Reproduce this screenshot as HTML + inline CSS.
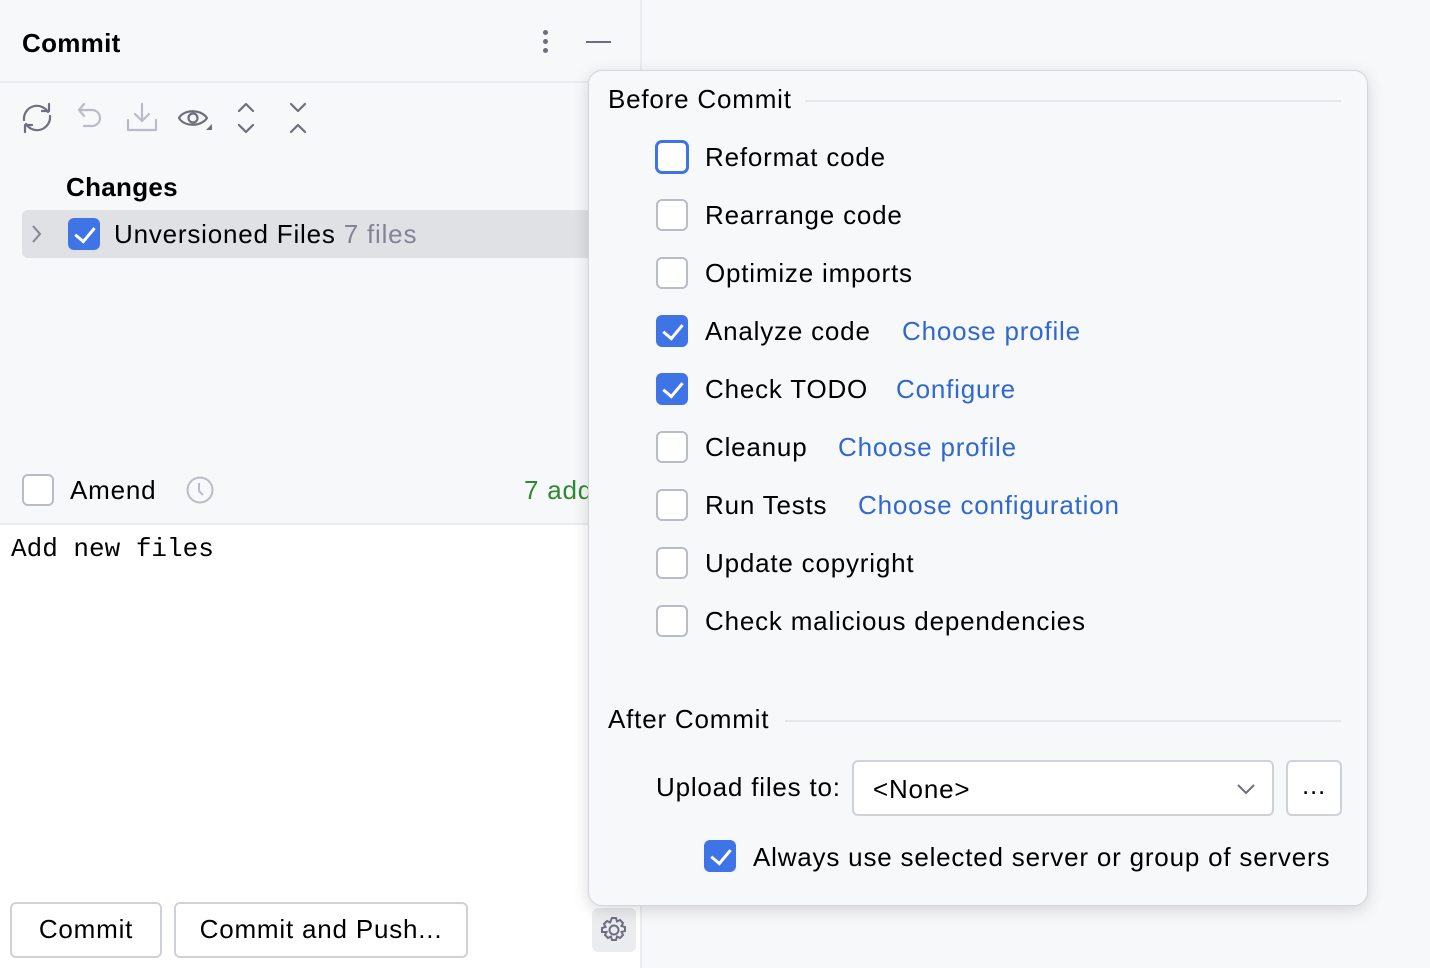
<!DOCTYPE html>
<html><head><meta charset="utf-8"><style>
*{box-sizing:border-box;margin:0;padding:0}
body{width:1430px;height:968px;background:#f7f8fa;font-family:"Liberation Sans",sans-serif;color:#000;position:relative;overflow:hidden;font-size:26px;letter-spacing:0.8px}
.a{position:absolute}
.cb{position:absolute;width:32px;height:32px;border:2px solid #b9bcc6;border-radius:6px;background:#fff}
.cb.on{background:#3f74e6;border-color:#3f74e6}
.cb.on::after{content:"";position:absolute;left:9px;top:3px;width:9px;height:16px;border:solid #fff;border-width:0 3.5px 3.5px 0;transform:rotate(40deg)}
.t{position:absolute;white-space:nowrap;line-height:30px}
.lnk{color:#3068cf}
.btn{position:absolute;border:2px solid #cfd1d8;border-radius:6px;background:#fff;text-align:center;line-height:50px}
</style></head><body>
<div class="a" style="left:640px;top:0;width:2px;height:968px;background:#ebecf0"></div>
<div class="a" style="left:0;top:81px;width:640px;height:2px;background:#ebecf0"></div>
<div class="t" style="left:22px;top:28px;font-weight:bold;font-size:26px;letter-spacing:0.3px">Commit</div>
<div class="a" style="left:543px;top:30px;width:5px;height:5px;border-radius:50%;background:#6c707e;box-shadow:0 9px 0 #6c707e,0 18px 0 #6c707e"></div>
<div class="a" style="left:586px;top:41px;width:25px;height:2px;background:#6c707e"></div>
<svg class="a" style="left:18px;top:98px" width="300" height="40" fill="none" stroke-width="2.2" stroke-linecap="round" stroke-linejoin="round">
<g stroke="#6c707e"><path d="M6 22a13 13 0 0 1 24-8M32 18a13 13 0 0 1-24 8"/><path d="M24 13h7V6M14 27H7v7"/></g>
<g stroke="#b9bcc6"><path d="M62 12h12a8 8 0 0 1 0 16h-8M66 6l-5 6 5 6"/><path d="M124 6v16M117 16l7 7 7-7M110 22v10h28V22"/></g>
<g stroke="#6c707e"><path d="M161 20c5-9 22-9 28 0-6 9-23 9-28 0z"/><circle cx="175" cy="20" r="4.5"/><path d="M221 13l7-7 7 7M221 27l7 7 7-7M273 6l7 7 7-7M273 34l7-7 7 7"/></g>
<path d="M188 32l6-6v6z" fill="#6c707e"/>
</svg>
<div class="t" style="left:66px;top:172px;font-weight:bold;letter-spacing:0.3px">Changes</div>
<div class="a" style="left:22px;top:210px;width:580px;height:48px;background:#dfe1e5;border-radius:6px"></div>
<svg class="a" style="left:30px;top:224px" width="14" height="20" fill="none" stroke="#818594" stroke-width="2"><path d="M3 2l7 8-7 8"/></svg>
<div class="cb on" style="left:68px;top:218px"></div>
<div class="t" style="left:114px;top:219px">Unversioned Files <span style="color:#818594">7 files</span></div>
<div class="cb" style="left:22px;top:474px"></div>
<div class="t" style="left:70px;top:475px">Amend</div>
<svg class="a" style="left:185px;top:475px" width="30" height="30" fill="none" stroke="#b9bcc6" stroke-width="2"><circle cx="15" cy="15" r="12.5"/><path d="M14 8v8l4 4"/></svg>
<div class="t" style="left:524px;top:475px;color:#2f8a2f">7 added</div>
<div class="a" style="left:0;top:523px;width:640px;height:2px;background:#ebecf0"></div>
<div class="a" style="left:0;top:525px;width:640px;height:443px;background:#fff"></div>
<div class="t" style="left:11px;top:534px;font-family:'Liberation Mono',monospace;font-size:26px;letter-spacing:0">Add new files</div>
<div class="btn" style="left:10px;top:902px;width:152px;height:56px">Commit</div>
<div class="btn" style="left:174px;top:902px;width:294px;height:56px">Commit and Push...</div>
<div class="a" style="left:592px;top:908px;width:44px;height:44px;background:#ebecf0;border-radius:6px"></div>
<svg class="a" style="left:599px;top:915px" width="30" height="30" fill="none" stroke="#6c707e" stroke-width="2"><circle cx="15" cy="15" r="4.5"/><path d="M13 3h4l1 3.5 3-1.5 3 3-1.5 3 3.5 1v4l-3.5 1 1.5 3-3 3-3-1.5-1 3.5h-4l-1-3.5-3 1.5-3-3 1.5-3L3 17v-4l3.5-1L5 9l3-3 3 1.5z"/></svg>

<div class="a" style="left:588px;top:70px;width:780px;height:836px;background:#f7f8fa;border:1px solid #d3d5db;border-radius:14px;box-shadow:0 4px 16px rgba(0,0,0,.15)"></div>
<div class="t" style="left:608px;top:84px">Before Commit</div>
<div class="a" style="left:805px;top:100px;width:536px;height:2px;background:#e6e7eb"></div>
<div class="cb" style="left:655px;top:140px;width:34px;height:34px;border:3px solid #3f74e6;border-radius:7px"></div>
<div class="t" style="left:705px;top:142px">Reformat code</div>
<div class="cb" style="left:656px;top:199px"></div><div class="t" style="left:705px;top:200px">Rearrange code</div>
<div class="cb" style="left:656px;top:257px"></div><div class="t" style="left:705px;top:258px">Optimize imports</div>
<div class="cb on" style="left:656px;top:315px"></div><div class="t" style="left:705px;top:316px">Analyze code</div><div class="t lnk" style="left:902px;top:316px">Choose profile</div>
<div class="cb on" style="left:656px;top:373px"></div><div class="t" style="left:705px;top:374px">Check TODO</div><div class="t lnk" style="left:896px;top:374px">Configure</div>
<div class="cb" style="left:656px;top:431px"></div><div class="t" style="left:705px;top:432px">Cleanup</div><div class="t lnk" style="left:838px;top:432px">Choose profile</div>
<div class="cb" style="left:656px;top:489px"></div><div class="t" style="left:705px;top:490px">Run Tests</div><div class="t lnk" style="left:858px;top:490px">Choose configuration</div>
<div class="cb" style="left:656px;top:547px"></div><div class="t" style="left:705px;top:548px">Update copyright</div>
<div class="cb" style="left:656px;top:605px"></div><div class="t" style="left:705px;top:606px">Check malicious dependencies</div>
<div class="t" style="left:608px;top:704px">After Commit</div>
<div class="a" style="left:785px;top:720px;width:556px;height:2px;background:#e6e7eb"></div>
<div class="t" style="left:656px;top:772px">Upload files to:</div>
<div class="a" style="left:852px;top:760px;width:422px;height:56px;background:#fff;border:2px solid #cfd1d8;border-radius:6px"></div>
<div class="t" style="left:873px;top:774px">&lt;None&gt;</div>
<svg class="a" style="left:1236px;top:782px" width="20" height="14" fill="none" stroke="#6c707e" stroke-width="2"><path d="M2 3l8 8 8-8"/></svg>
<div class="btn" style="left:1286px;top:760px;width:56px;height:56px;line-height:46px">...</div>
<div class="cb on" style="left:704px;top:840px"></div>
<div class="t" style="left:753px;top:842px">Always use selected server or group of servers</div>
</body></html>
